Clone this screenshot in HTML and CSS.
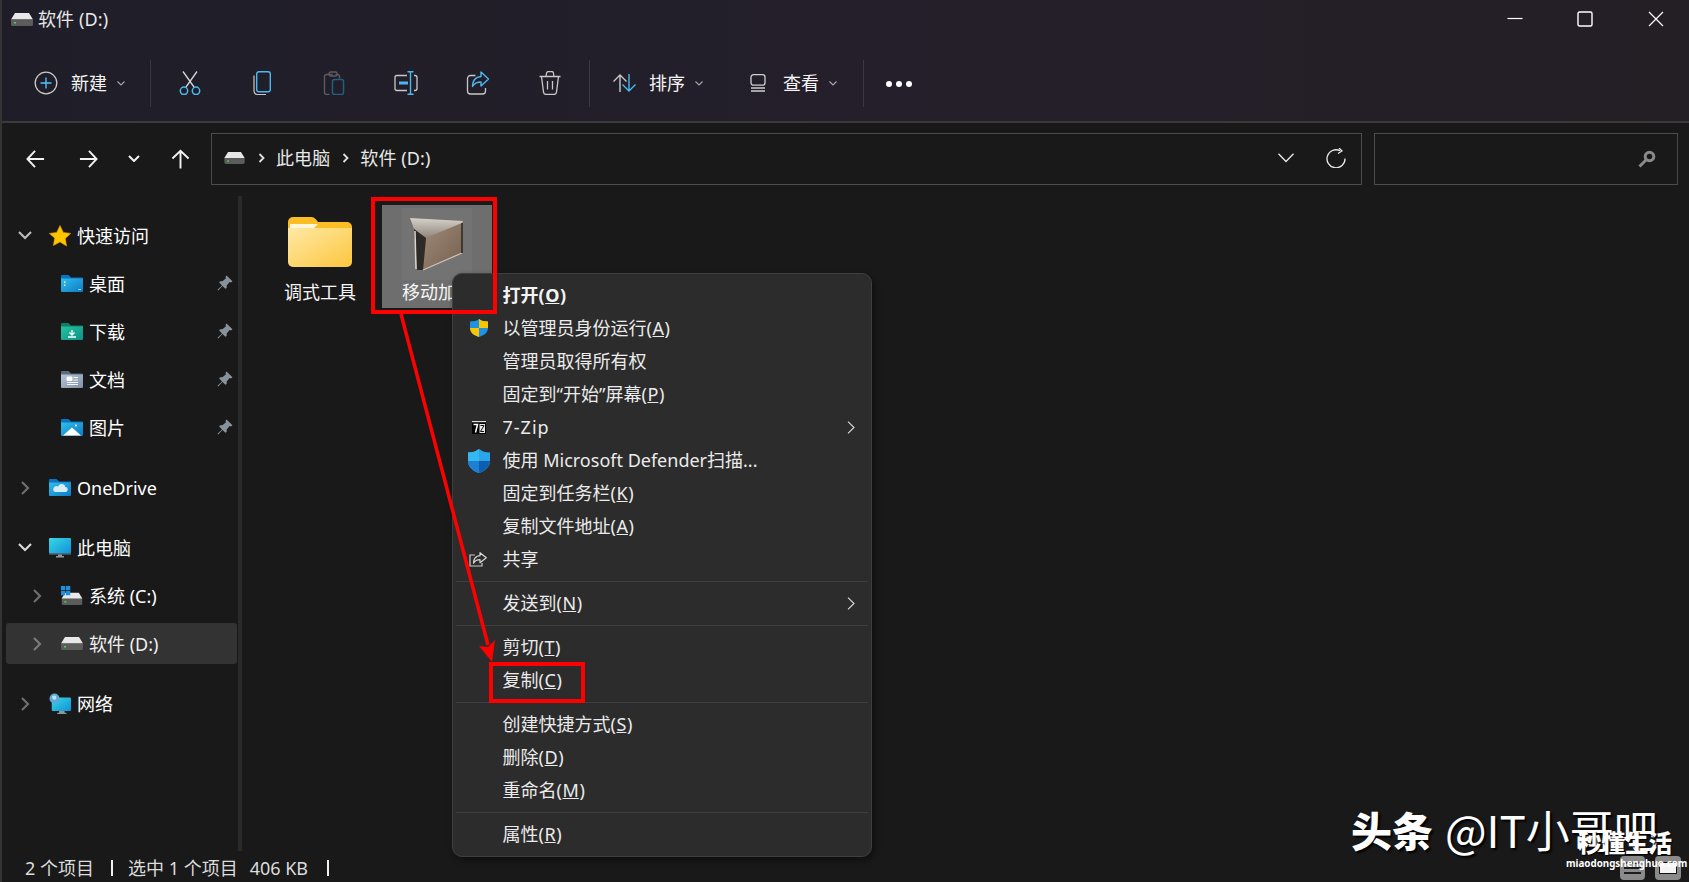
FILE: index.html
```html
<!DOCTYPE html>
<html lang="zh-CN">
<head>
<meta charset="utf-8">
<title>软件 (D:)</title>
<link rel="stylesheet" href="styles.css">
</head>
<body>
<svg class="defs" width="0" height="0" aria-hidden="true">
  <defs>
    <linearGradient id="gBlue" x1="0" y1="0" x2="1" y2="1"><stop offset="0" stop-color="#2cc0ea"/><stop offset="1" stop-color="#0f78c8"/></linearGradient>
    <linearGradient id="gGreen" x1="0" y1="0" x2="1" y2="1"><stop offset="0" stop-color="#25c3a0"/><stop offset="1" stop-color="#0b9187"/></linearGradient>
    <linearGradient id="gGrey" x1="0" y1="0" x2="1" y2="1"><stop offset="0" stop-color="#b6c4d6"/><stop offset="1" stop-color="#7f90a8"/></linearGradient>
    <linearGradient id="gFolder" x1="0" y1="0" x2="1" y2="1"><stop offset="0" stop-color="#ffe9a6"/><stop offset="1" stop-color="#fcc63e"/></linearGradient>
    <linearGradient id="gBrown" x1="0" y1="0" x2="1" y2="1"><stop offset="0" stop-color="#9f8a78"/><stop offset="1" stop-color="#75604f"/></linearGradient>
    <linearGradient id="gFlap" x1="0" y1="0" x2="0" y2="1"><stop offset="0" stop-color="#d6d1ca"/><stop offset="1" stop-color="#8f857a"/></linearGradient>
    <linearGradient id="gScreen" x1="0" y1="0" x2="1" y2="1"><stop offset="0" stop-color="#38d8e6"/><stop offset="1" stop-color="#1190d8"/></linearGradient>
    <symbol id="drive" viewBox="0 0 22 13">
      <path d="M4 0h14l4 6.500H0z" fill="#e8e8e8"/>
      <path d="M0 6.500h22V11.500a1.500 1.500 0 0 1-1.500 1.500h-19A1.500 1.500 0 0 1 0 11.500z" fill="#5c5c5c"/>
      <rect x="3" y="9" width="2" height="1.500" fill="#3ddc4e"/>
    </symbol>
    <symbol id="pin" viewBox="0 0 16 16">
      <path d="M9.500 0.500 15.500 6.200 13.800 7.500 12.600 7 9.700 10.600 9.700 13 8.300 13.800 5.400 10.900 1.200 15.500 0.500 14.800 5 10.500 2.200 7.500 3 6.200 5.400 6.200 9 3.200 8.400 2z" fill="#8a9299"/>
    </symbol>
    <symbol id="fold" viewBox="0 0 22 17">
      <path d="M1 0h6.500l2.500 2.500h11a1 1 0 0 1 1 1V5H0V1a1 1 0 0 1 1-1z" class="tab"/>
      <path d="M0 3.500h22v12.500a1 1 0 0 1-1 1H1a1 1 0 0 1-1-1z" class="bd"/>
    </symbol>
  </defs>
</svg>

<div class="window">
  <header class="chrome">
    <div class="titlebar">
      <svg class="ic-drive"><use href="#drive"/></svg>
      <span class="title-text">软件 (D:)</span>
      <div class="winctl">
        <svg class="wc" viewBox="0 0 16 16"><path d="M0.500 7.500h15" stroke="#fff" stroke-width="1.200"/></svg>
        <svg class="wc" viewBox="0 0 16 16"><rect x="1" y="1" width="14" height="14" rx="1.500" fill="none" stroke="#fff" stroke-width="1.400"/></svg>
        <svg class="wc" viewBox="0 0 16 16"><path d="M1 1l14 14M15 1L1 15" stroke="#fff" stroke-width="1.200"/></svg>
      </div>
    </div>
    <div class="toolbar">
      <div class="tb-label new">
        <svg class="tb-plus" viewBox="0 0 24 24"><circle cx="12" cy="12" r="10.800" fill="none" stroke="#c8c8c8" stroke-width="1.300"/><path d="M12 6.500v11M6.500 12h11" stroke="#4cc2ff" stroke-width="1.400"/></svg>
        <span>新建</span>
        <svg class="chev" viewBox="0 0 8 5"><path d="M0.500 0.500 4 4 7.500 0.500" fill="none" stroke="#a8a8a8" stroke-width="1.100"/></svg>
      </div>
      <i class="tb-div"></i>
      <div class="tb-icons">
        <div class="tb-btn"><svg viewBox="0 0 22 24"><path d="M4 0.500 15 16M18 0.500 7 16" stroke="#d5d5d5" stroke-width="1.300" fill="none"/><circle cx="5" cy="19.800" r="3.700" fill="none" stroke="#4cb8f0" stroke-width="1.500"/><circle cx="17" cy="19.800" r="3.700" fill="none" stroke="#4cb8f0" stroke-width="1.500"/></svg></div>
        <div class="tb-btn"><svg viewBox="0 0 18 24"><path d="M1 4.500v15.500a3.500 3.500 0 0 0 3.500 3.500H13" fill="none" stroke="#c8c8c8" stroke-width="1.200"/><rect x="3.700" y="0.700" width="13.600" height="20" rx="2.200" fill="none" stroke="#4cb8f0" stroke-width="1.400"/></svg></div>
        <div class="tb-btn"><svg viewBox="0 0 21 24"><path d="M9 3.500H3a2 2 0 0 0-2 2V21.500a2 2 0 0 0 2 2h3M12 3.500h2a2 2 0 0 1 2 2V7.500" fill="none" stroke="#5c5c60" stroke-width="1.400"/><rect x="5.500" y="1" width="8" height="4" rx="1.500" fill="none" stroke="#5c5c60" stroke-width="1.300"/><rect x="9" y="8.500" width="11" height="15" rx="2" fill="none" stroke="#245f7e" stroke-width="1.500"/></svg></div>
        <div class="tb-btn"><svg viewBox="0 0 24 24"><path d="M13 4.500H3a2 2 0 0 0-2 2v11a2 2 0 0 0 2 2h10M20 4.500h1a2 2 0 0 1 2 2v11a2 2 0 0 1-2 2h-1" fill="none" stroke="#c8c8c8" stroke-width="1.300"/><path d="M5 12h9" stroke="#4cb8f0" stroke-width="3"/><path d="M13.500 0.800h6M16.500 0.800v22.400M13.500 23.200h6" fill="none" stroke="#4cb8f0" stroke-width="1.400"/></svg></div>
        <div class="tb-btn"><svg viewBox="0 0 23 24"><path d="M9 4.500H4a3 3 0 0 0-3 3V20a3 3 0 0 0 3 3h12a3 3 0 0 0 3-3v-3" fill="none" stroke="#c8c8c8" stroke-width="1.300"/><path d="M14.500 1 22 8l-7.500 7v-4c-4 0-6.500 1-8.500 4.500 0-6 3-9.500 8.500-10z" fill="none" stroke="#4cb8f0" stroke-width="1.400" stroke-linejoin="round"/></svg></div>
        <div class="tb-btn"><svg viewBox="0 0 22 24"><path d="M0.500 5.500h21M7 5.500 7.500 2.500a2 2 0 0 1 2-2h3a2 2 0 0 1 2 2L15 5.500M2.500 5.500 4.500 21a2.800 2.800 0 0 0 2.800 2.500h7.400A2.800 2.800 0 0 0 17.500 21l2-15.500M8.500 10v8.500M13.500 10v8.500" fill="none" stroke="#c8c8c8" stroke-width="1.300"/></svg></div>
      </div>
      <i class="tb-div d2"></i>
      <div class="tb-label sort">
        <svg class="tb-sort" viewBox="0 0 24 18"><path d="M8 18V1M1.500 7.500 8 1l6.500 6.500" fill="none" stroke="#c8c8c8" stroke-width="1.400"/><path d="M17 0v17M10.500 10.500 17 17l6.500-6.500" fill="none" stroke="#4cb8f0" stroke-width="1.400"/></svg>
        <span>排序</span>
        <svg class="chev" viewBox="0 0 8 5"><path d="M0.500 0.500 4 4 7.500 0.500" fill="none" stroke="#a8a8a8" stroke-width="1.100"/></svg>
      </div>
      <div class="tb-label view">
        <svg class="tb-view" viewBox="0 0 16 18"><rect x="1" y="0.700" width="14" height="10.500" rx="2.500" fill="none" stroke="#d0d0d0" stroke-width="1.300"/><path d="M1 14h14M1 17h14" stroke="#d0d0d0" stroke-width="1.300"/></svg>
        <span>查看</span>
        <svg class="chev" viewBox="0 0 8 5"><path d="M0.500 0.500 4 4 7.500 0.500" fill="none" stroke="#a8a8a8" stroke-width="1.100"/></svg>
      </div>
      <i class="tb-div d3"></i>
      <div class="tb-more"><i></i><i></i><i></i></div>
    </div>
  </header>

  <nav class="navbar">
    <div class="navbtns">
      <svg class="nb back" viewBox="0 0 20 20"><path d="M1.500 10h17.500M9.500 1.500 1.500 10l8 8.500" fill="none" stroke="#f2f2f2" stroke-width="2"/></svg>
      <svg class="nb fwd" viewBox="0 0 20 20"><path d="M18.500 10H1M10.500 1.500l8 8.500-8 8.500" fill="none" stroke="#f2f2f2" stroke-width="2"/></svg>
      <svg class="nb down" viewBox="0 0 12 7"><path d="M1 1l5 5 5-5" fill="none" stroke="#f2f2f2" stroke-width="2"/></svg>
      <svg class="nb up" viewBox="0 0 20 20"><path d="M10 20V1.500M1.500 9.500 10 1.500l8.500 8" fill="none" stroke="#f2f2f2" stroke-width="2"/></svg>
    </div>
    <div class="address">
      <svg class="addr-drive"><use href="#drive"/></svg>
      <svg class="crumb" viewBox="0 0 7 10"><path d="M1.500 1 5.500 5 1.500 9" fill="none" stroke="#e0e0e0" stroke-width="1.800"/></svg>
      <span class="crumb-t">此电脑</span>
      <svg class="crumb" viewBox="0 0 7 10"><path d="M1.500 1 5.500 5 1.500 9" fill="none" stroke="#e0e0e0" stroke-width="1.800"/></svg>
      <span class="crumb-t">软件 (D:)</span>
      <svg class="addr-drop" viewBox="0 0 16 10"><path d="M0.500 0.700 8 8.500 15.500 0.700" fill="none" stroke="#e8e8e8" stroke-width="1.300"/></svg>
      <svg class="addr-ref" viewBox="0 0 20 20"><path d="M14 2.700A9 9 0 1 0 19 10.500" fill="none" stroke="#e8e8e8" stroke-width="1.300"/><path d="M13 0l3 3-4 2.500" fill="none" stroke="#e8e8e8" stroke-width="1.300"/></svg>
    </div>
    <div class="search">
      <svg viewBox="0 0 18 18"><circle cx="11.500" cy="6.500" r="4.300" fill="none" stroke="#8a8a8a" stroke-width="3"/><path d="M8 10 1.500 16.500" stroke="#8a8a8a" stroke-width="3"/></svg>
    </div>
  </nav>

  <div class="body">
    <aside class="sidebar">
      <div class="row l0">
        <svg class="tw open" viewBox="0 0 14 9"><path d="M1 1l6 6 6-6" fill="none" stroke="#bcbcbc" stroke-width="2.200"/></svg>
        <svg class="ic" viewBox="0 0 22 22"><path d="M11 0.500l3.300 6.900 7.400 1-5.400 5.200 1.300 7.500L11 17l-6.600 3.600 1.300-7.500L.3 8.400l7.400-1z" fill="#fdc400" stroke="#e69a00" stroke-width=".6"/></svg>
        <span>快速访问</span>
      </div>
      <div class="row l1 sub">
        <svg class="ic f-blue" viewBox="0 0 22 17"><use href="#fold"/><path d="M3 6.500h1.500V8H3zM3 9.500h1.500V11H3z" fill="#e8f6fc"/><path d="M17 14.500h3" stroke="#9ad4f0"/></svg>
        <span>桌面</span>
        <svg class="pin"><use href="#pin"/></svg>
      </div>
      <div class="row l1 sub">
        <svg class="ic f-green" viewBox="0 0 22 17"><use href="#fold"/><path d="M11 7v5M8.500 9.500 11 12l2.500-2.500M7 14h8" fill="none" stroke="#fff" stroke-width="1.300"/></svg>
        <span>下载</span>
        <svg class="pin"><use href="#pin"/></svg>
      </div>
      <div class="row l1 sub">
        <svg class="ic f-grey" viewBox="0 0 22 17"><use href="#fold"/><path d="M6 6h5v3.500H6zM12.500 6.500H17M12.500 9H17M6 11.500h11M6 13.500h11" fill="#fff" stroke="#fff" stroke-width=".9"/></svg>
        <span>文档</span>
        <svg class="pin"><use href="#pin"/></svg>
      </div>
      <div class="row l1 sub">
        <svg class="ic f-blue" viewBox="0 0 22 17"><use href="#fold"/><path d="M2 16.500 11 8.500l9 8z" fill="#fff"/><circle cx="15" cy="6.500" r="1" fill="#fff"/></svg>
        <span>图片</span>
        <svg class="pin"><use href="#pin"/></svg>
      </div>

      <div class="row l0 gap">
        <svg class="tw" viewBox="0 0 9 14"><path d="M1 1l6 6-6 6" fill="none" stroke="#6e6e6e" stroke-width="2.200"/></svg>
        <svg class="ic f-blue od" viewBox="0 0 22 17"><use href="#fold"/><path d="M6 13h10a2.500 2.500 0 0 0 .3-5A3.800 3.800 0 0 0 9 7.500 3 3 0 0 0 6 13z" fill="#d7eefa"/></svg>
        <span>OneDrive</span>
      </div>

      <div class="row l0 gap">
        <svg class="tw open" viewBox="0 0 14 9"><path d="M1 1l6 6 6-6" fill="none" stroke="#d8d8d8" stroke-width="2.200"/></svg>
        <svg class="ic tall" viewBox="0 0 22 20"><rect x="0" y="0" width="22" height="15.500" rx="1" fill="url(#gScreen)"/><path d="M0 15.500h22v1H0z" fill="#6f7a80"/><path d="M9 16.500h4v1.500H9zM7 18h8v1.500H7z" fill="#8e979c"/></svg>
        <span>此电脑</span>
      </div>
      <div class="row l1">
        <svg class="tw" viewBox="0 0 9 14"><path d="M1 1l6 6-6 6" fill="none" stroke="#6e6e6e" stroke-width="2.200"/></svg>
        <svg class="ic tall" viewBox="0 0 22 20"><use href="#drive" x="0.500" y="6.500" width="21" height="12.500"/><path d="M0 0h4.300v4.300H0zM5 0h4.300v4.300H5zM0 5h4.300v4.300H0zM5 5h4.300v4.300H5z" fill="#1b8fe0"/></svg>
        <span>系统 (C:)</span>
      </div>
      <div class="row l1 selected">
        <svg class="tw" viewBox="0 0 9 14"><path d="M1 1l6 6-6 6" fill="none" stroke="#7a7a7a" stroke-width="2.200"/></svg>
        <svg class="ic drive-s"><use href="#drive"/></svg>
        <span>软件 (D:)</span>
      </div>

      <div class="row l0 gap">
        <svg class="tw" viewBox="0 0 9 14"><path d="M1 1l6 6-6 6" fill="none" stroke="#6e6e6e" stroke-width="2.200"/></svg>
        <svg class="ic tall" viewBox="0 0 24 24"><rect x="3" y="5" width="21" height="14.500" rx="1" fill="url(#gScreen)"/><path d="M11 19.500h6v2h-6zM9 21.500h10V23H9z" fill="#8e979c"/><circle cx="6" cy="6" r="5.500" fill="#5fa8d8"/><path d="M3 4c2-2 5-2 5 1s-3 3-4 1z" fill="#bfe3f7"/></svg>
        <span>网络</span>
      </div>
    </aside>

    <main class="files">
      <div class="item">
        <div class="thumb">
          <svg class="big-folder" viewBox="0 0 64 50"><path d="M5 0h18c3 0 5 2 7 5h29a5 5 0 0 1 5 5v6H0V5a5 5 0 0 1 5-5z" fill="#fcbe24"/><path d="M2 7h28l-4 4H2z" fill="#fff6dc"/><path d="M0 11h64v34a5 5 0 0 1-5 5H5a5 5 0 0 1-5-5z" fill="url(#gFolder)"/></svg>
        </div>
        <div class="label">调式工具</div>
      </div>
      <div class="item sel">
        <div class="thumb framed">
          <svg class="big-file" viewBox="0 0 70 72">
            <path d="M24 30 60 15V45L21 62z" fill="url(#gBrown)"/>
            <path d="M8 10 61 13 60 15 24 30 12 21z" fill="url(#gFlap)"/>
            <path d="M12 21 24 30 21 62 15 62z" fill="#2e2a26"/>
            <path d="M13 23 14 61" stroke="#d8d4ce" stroke-width="1.500"/>
            <path d="M21 62 60 45" stroke="#c9c1b6" stroke-width="1.300"/>
            <path d="M60 15V45" stroke="#2b2622" stroke-width="1.500"/>
          </svg>
        </div>
        <div class="label">移动加</div>
      </div>
    </main>
  </div>

  <footer class="status">
    <span>2 个项目</span><i class="st-sep"></i>
    <span>选中 1 个项目</span><span class="st-size">406 KB</span><i class="st-sep s2"></i>
    <div class="toggles">
      <div class="tg"><i></i><i></i><i></i></div>
      <div class="tg big"><b></b></div>
    </div>
  </footer>
</div>

<div class="menu">
  <div class="mi strong"><span>打开(<u>O</u>)</span></div>
  <div class="mi"><svg class="mic shield" viewBox="0 0 18 18"><path d="M9 0c2.500 1.800 5 2.500 9 2.500V9c0 4.500-4 7.500-9 9-5-1.500-9-4.500-9-9V2.500C4 2.500 6.500 1.800 9 0z" fill="#1d93e3"/><path d="M9 0c2.500 1.800 5 2.500 9 2.500V9H9zM0 9h9v9c-5-1.500-9-4.500-9-9z" fill="#fdc400"/></svg><span>以管理员身份运行(<u>A</u>)</span></div>
  <div class="mi"><span>管理员取得所有权</span></div>
  <div class="mi"><span>固定到“开始”屏幕(<u>P</u>)</span></div>
  <div class="mi"><svg class="mic zip" viewBox="0 0 14 13"><path d="M0 0.500h14" stroke="#ddd"/><rect x="0" y="2" width="14" height="11" fill="#000"/><rect x="7.500" y="3" width="5.500" height="9" fill="#e8e8e8"/><path d="M1.500 3.500h4L3.500 11.500" fill="none" stroke="#fff" stroke-width="1.500"/><path d="M8.500 4.500h3.500L8.500 10.500h3.500" fill="none" stroke="#111"/></svg><span class="wide">7-Zip</span><svg class="sub-ar" viewBox="0 0 8 13"><path d="M1 .7 7 6.500 1 12.300" fill="none" stroke="#dcdcdc" stroke-width="1.100"/></svg></div>
  <div class="mi"><svg class="mic def" viewBox="0 0 22 24"><path d="M11 0c3 2.500 6.500 3.500 11 3.500V12c0 6-5 10-11 12C5 22 0 18 0 12V3.500C4.500 3.500 8 2.500 11 0z" fill="#2aa5ec"/><path d="M11 0v12H0V3.500C4.500 3.500 8 2.500 11 0z" fill="#35b8f2"/><path d="M11 12h11c0 6-5 10-11 12z" fill="#0f5fb0"/><path d="M11 12v12C5 22 0 18 0 12z" fill="#1b80d2"/></svg><span>使用 Microsoft Defender扫描...</span></div>
  <div class="mi"><span>固定到任务栏(<u>K</u>)</span></div>
  <div class="mi"><span>复制文件地址(<u>A</u>)</span></div>
  <div class="mi"><svg class="mic shr" viewBox="0 0 18 15"><path d="M6 3H1v11h12v-3" fill="none" stroke="#c8c8c8" stroke-width="1.200"/><path d="M11 .7 17.300 5.700 11 10.700V7.700C8 7.700 6 8.700 4.500 11.200 4.700 7 7 4 11 3.700z" fill="none" stroke="#d8d8d8" stroke-width="1.200" stroke-linejoin="round"/></svg><span>共享</span></div>
  <hr>
  <div class="mi"><span>发送到(<u>N</u>)</span><svg class="sub-ar" viewBox="0 0 8 13"><path d="M1 .7 7 6.500 1 12.300" fill="none" stroke="#dcdcdc" stroke-width="1.100"/></svg></div>
  <hr>
  <div class="mi"><span>剪切(<u>T</u>)</span></div>
  <div class="mi"><span>复制(<u>C</u>)</span></div>
  <hr>
  <div class="mi"><span>创建快捷方式(<u>S</u>)</span></div>
  <div class="mi"><span>删除(<u>D</u>)</span></div>
  <div class="mi"><span>重命名(<u>M</u>)</span></div>
  <hr>
  <div class="mi"><span>属性(<u>R</u>)</span></div>
</div>

<svg class="annot" viewBox="0 0 1689 882" aria-hidden="true">
  <rect x="373" y="199" width="122" height="113" fill="none" stroke="#fe0000" stroke-width="4"/>
  <rect x="491" y="664" width="92" height="37" fill="none" stroke="#fe0000" stroke-width="4"/>
  <path d="M401 314 488 645" stroke="#fe0000" stroke-width="3.500" fill="none"/>
  <path d="M492 662 479 646 488 647 495 640z" fill="#fe0000"/>
</svg>

<div class="wm">
  <span class="wm-a">头条</span><span class="wm-b">@IT小哥吧</span>
</div>
<div class="wm2">秒懂生活</div>
<div class="wm3">miaodongshenghuo.com</div>
</body>
</html>
```
FILE: styles.css
```css
* { box-sizing: border-box; }
html, body { margin: 0; padding: 0; }
body {
  width: 1689px;
  height: 882px;
  overflow: hidden;
  position: relative;
  background: #191919;
  color: #f4f4f4;
  font: 18px/24px "Noto Sans", "Noto Sans CJK SC", sans-serif;
}
svg { display: block; flex: none; }
i { display: block; }
.defs { position: absolute; }

.window {
  height: 882px;
  display: flex;
  flex-direction: column;
  border-left: 2px solid #343434;
}

.chrome {
  height: 123px;
  background: linear-gradient(90deg, #1f1e28, #241f2a 50%, #241f25);
  border-bottom: 2px solid #3a3a3a;
  flex: none;
}
.titlebar {
  height: 45px;
  display: flex;
  align-items: flex-start;
  padding: 7px 0 0 9px;
}
.ic-drive { width: 22px; height: 13px; margin: 6px 5px 0 0; }
.title-text { color: #e8e8e8; letter-spacing: .1px; }
.winctl { margin-left: auto; display: flex; padding: 4px 25px 0 0; gap: 55px; }
.wc { width: 16px; height: 16px; }
.wc:first-child { margin-right: -1px; }

.toolbar { height: 76px; display: flex; align-items: center; padding-left: 32px; }
.tb-label { display: flex; align-items: center; color: #f4f4f4; }
.tb-plus { width: 24px; height: 24px; margin-right: 13px; }
.chev { width: 8px; height: 5px; margin-left: 10px; }
.new { width: 116px; }
.tb-div { width: 1px; height: 47px; background: #3a3842; }
.tb-icons { display: flex; margin-left: 3px; }
.tb-btn { width: 72px; height: 24px; display: flex; justify-content: center; }
.tb-btn svg { height: 24px; width: 24px; }
.d2 { margin-left: 3px; }
.sort { margin-left: 22px; }
.tb-sort { width: 24px; height: 18px; margin-right: 13px; }
.view { margin-left: 47px; }
.tb-view { width: 16px; height: 18px; margin-right: 17px; }
.d3 { margin-left: 26px; }
.tb-more { display: flex; gap: 4px; margin-left: 22px; padding-top: 1px; }
.tb-more i { width: 6px; height: 6px; border-radius: 50%; background: #fff; }

.navbar {
  height: 73px;
  flex: none;
  display: flex;
  align-items: flex-start;
  padding-top: 10px;
}
.navbtns { width: 209px; height: 51px; display: flex; align-items: center; padding-left: 24px; }
.nb { width: 19px; height: 20px; }
.fwd { margin-left: 34px; }
.down { width: 12px; height: 7px; margin-left: 30px; }
.up { margin-left: 31px; }
.address, .search {
  height: 52px;
  border: 1.500px solid #4c4c4c;
  display: flex;
  align-items: center;
}
.address { width: 1151px; padding: 0 0 2px 12px; color: #e8e8e8; font-size: 18px; }
.addr-drive { width: 21px; height: 12px; margin-right: 13px; }
.crumb { width: 7px; height: 10px; margin-right: 11px; }
.crumb-t { margin-right: 12px; letter-spacing: .1px; }
.addr-drop { width: 16px; height: 10px; margin-left: auto; margin-right: -1px; }
.addr-ref { width: 20px; height: 20px; margin: 0 15px 0 33px; }
.search { width: 304px; margin-left: 12px; justify-content: flex-end; padding-right: 21px; }
.search svg { width: 18px; height: 18px; }

.body { flex: 1; display: flex; min-height: 0; }
.sidebar {
  width: 240px;
  flex: none;
  padding: 19px 0 0 4px;
  border-right: 4px solid #2a2a2a;
}
.row {
  height: 41px;
  margin-bottom: 7px;
  display: flex;
  align-items: center;
  position: relative;
  border-radius: 3px;
  color: #fff;
  width: 231px;
}
.l0 { padding-left: 12px; }
.l1 { padding-left: 27px; }
.sub { padding-left: 55px; }
.gap { margin-top: 19px; }
.selected { background: #333; color: #f0f0f0; }
.tw { width: 9px; height: 14px; margin-right: 19px; margin-left: 3px; }
.tw.open { width: 14px; height: 9px; margin-right: 17px; margin-left: 0; }
.l1 .tw { margin-right: 19px; margin-left: 0; }
.ic { width: 22px; height: 22px; margin-right: 6px; }
.ic.tall { height: 22px; }
.sub .ic { height: 17px; margin-right: 6px; }
.od { height: 17px; }
.drive-s { height: 13px; }
.pin { width: 16px; height: 16px; position: absolute; right: 4px; top: 12px; }

.tab { fill: var(--tab); }
.bd { fill: var(--bd); }
.f-blue { --tab: #0b72c6; --bd: url(#gBlue); }
.f-green { --tab: #0e7f62; --bd: url(#gGreen); }
.f-grey { --tab: #5d6b7d; --bd: url(#gGrey); }

.files { flex: 1; display: flex; gap: 7px; padding: 9px 0 0 23px; }
.item { width: 110px; height: 103px; display: flex; flex-direction: column; align-items: center; }
.sel { background: #6e6e6e; align-items: flex-start; }
.thumb { width: 70px; height: 72px; margin-top: 3px; display: flex; align-items: center; justify-content: center; }
.framed { margin-left: 20px; background: #737373; }
.big-folder { width: 64px; height: 50px; margin-bottom: 4px; }
.big-file { width: 70px; height: 72px; }
.label { white-space: nowrap; line-height: 24px; color: #f6f6f6; }
.sel .label { margin-left: 20px; }

.status {
  height: 31px;
  flex: none;
  display: flex;
  align-items: center;
  padding: 2px 0 0 23px;
  color: #dcdcdc;
  position: relative;
}
.st-sep { width: 2px; height: 16px; background: #f0f0f0; margin: 0 15px 0 17px; }
.st-sep.s2 { margin-left: 19px; }
.st-size { margin-left: 12px; }
.toggles { margin-left: auto; display: flex; gap: 10px; padding: 0 8px 0 0; }
.tg { width: 25px; height: 24px; background: #8a8a8a; border-radius: 4px; padding: 6px 4px; display: flex; flex-direction: column; gap: 3px; }
.tg i { height: 2px; background: #1c1c1c; }
.tg.big { width: 26px; }
.tg b { display: block; height: 13px; background: #f4f4f4; border: 1px solid #111; }

.menu {
  position: absolute;
  left: 452px;
  top: 273px;
  width: 420px;
  height: 584px;
  padding: 4.500px 3px 0 3px;
  background: #2c2c2c;
  border: 1px solid #3f3f3f;
  border-radius: 10px;
  box-shadow: 2px 3px 6px rgba(0,0,0,.45);
  color: #ebebeb;
}
.mi { height: 33px; position: relative; display: flex; align-items: center; padding-left: 46.500px; white-space: nowrap; }
.mi u { padding: 0 .6px; }
.wide { letter-spacing: 1px; }
.strong { font-weight: 700; color: #f4f4f4; }
.menu hr { margin: 5px 0; height: 1px; border: 0; background: #3e3e3e; }
.mic { position: absolute; }
.shield { left: 14px; top: 7px; width: 18px; height: 18px; }
.zip { left: 16px; top: 10px; width: 14px; height: 13px; }
.def { left: 12px; top: 5px; width: 22px; height: 24px; }
.shr { left: 13px; top: 9px; width: 18px; height: 15px; }
.sub-ar { position: absolute; right: 13px; top: 10px; width: 8px; height: 13px; }

.annot { position: absolute; left: 0; top: 0; width: 1689px; height: 882px; pointer-events: none; }

.wm {
  position: absolute;
  left: 1351px;
  top: 801px;
  display: flex;
  align-items: center;
  color: #fff;
  white-space: nowrap;
  text-shadow: 2px 2px 2px #000;
  line-height: 56px;
}
.wm-a { font-size: 41px; font-weight: 900; font-family: "Noto Sans CJK SC", sans-serif; }
.wm-b { font-size: 44px; font-weight: 400; margin-left: 12px; font-family: "Noto Sans CJK SC", sans-serif; }
.wm2 {
  position: absolute;
  left: 1578px;
  top: 826px;
  font: 900 23.500px/32px "Noto Sans CJK SC", sans-serif;
  color: #fff;
  white-space: nowrap;
  text-shadow: 1px 1px 1px #000;
}
.wm3 {
  position: absolute;
  left: 1566px;
  top: 857px;
  font: 700 9.800px/14px "Noto Sans", sans-serif;
  color: #fff;
  white-space: nowrap;
}
```
